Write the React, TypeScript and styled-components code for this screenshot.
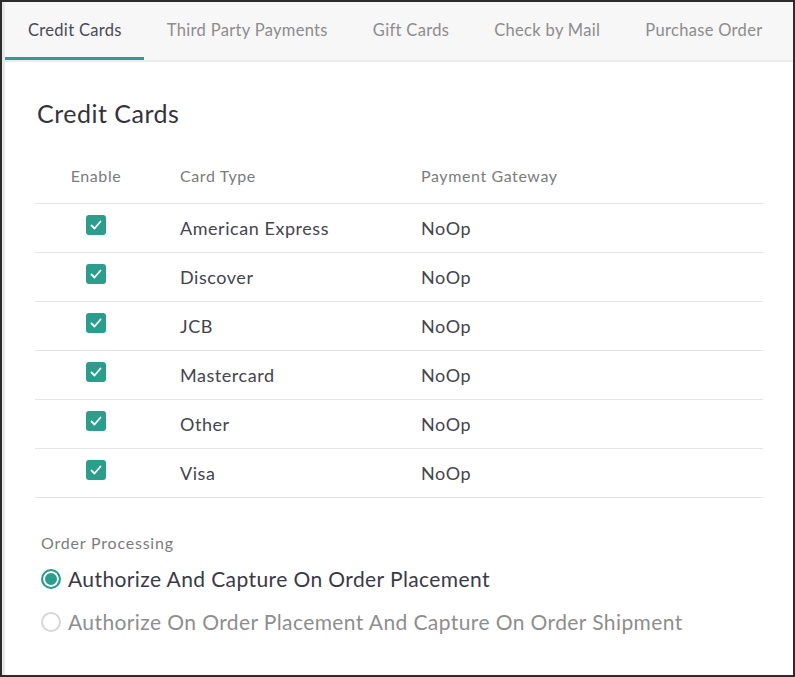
import { useState } from "react";
import styled, { createGlobalStyle } from "styled-components";

const GlobalStyle = createGlobalStyle`
  html, body {
    margin: 0;
    padding: 0;
  }
  body {
    font-family: Lato, "Open Sans", sans-serif;
    color: #3f3f4a;
  }
  * {
    box-sizing: border-box;
  }
`;

const Frame = styled.div`
  display: flex;
  height: 100vh;
  border: 2px solid #2b2b2b;
  background: #fff;
`;

const Gutter = styled.div`
  width: 3px;
  background: #e8e8e8;
`;

const Panel = styled.div`
  flex: 1;
  min-width: 0;
  display: flex;
  flex-direction: column;
`;

const TabBar = styled.div`
  display: flex;
  overflow: hidden;
  background: #f7f7f7;
  border-bottom: 2px solid #ececec;
`;

const Tab = styled.button<{ $active?: boolean }>`
  flex: none;
  white-space: nowrap;
  height: 58px;
  padding: 1px 22px 0 23px;
  border: none;
  border-bottom: 3px solid ${(p) => (p.$active ? "#2a9d8c" : "transparent")};
  background: none;
  font-family: inherit;
  font-size: 16.5px;
  letter-spacing: 0.32px;
  color: ${(p) => (p.$active ? "#4a4a58" : "#8c8c8c")};
  cursor: pointer;
`;

const Content = styled.div`
  padding: 36px 30px 0;
`;

const Title = styled.h2`
  margin: 0 0 0 2px;
  font-size: 25px;
  font-weight: 400;
  letter-spacing: 0.5px;
  line-height: 30px;
  color: #33333d;
`;

const Table = styled.div`
  margin-top: 22px;
  display: grid;
  grid-template-columns: 122px 241px 1fr;
`;

const HeadCell = styled.div<{ $center?: boolean }>`
  height: 54px;
  display: flex;
  align-items: center;
  justify-content: ${(p) => (p.$center ? "center" : "flex-start")};
  padding-left: ${(p) => (p.$center ? "0" : "23px")};
  padding-bottom: 3px;
  border-bottom: 1px solid #e4e4e4;
  font-size: 16px;
  letter-spacing: 0.6px;
  color: #7c7c7c;
`;

const Cell = styled.div<{ $center?: boolean }>`
  height: 49px;
  display: flex;
  align-items: center;
  justify-content: ${(p) => (p.$center ? "center" : "flex-start")};
  padding-left: ${(p) => (p.$center ? "0" : "23px")};
  padding-bottom: ${(p) => (p.$center ? "6px" : "0")};
  border-bottom: 1px solid #e4e4e4;
  font-size: 18px;
  letter-spacing: 0.55px;
  color: #44444e;
`;

const Check = styled.span`
  width: 20px;
  height: 20px;
  border-radius: 3px;
  background: #2a9d8c;
  display: flex;
  align-items: center;
  justify-content: center;
`;

const Section = styled.div`
  padding: 35px 6px 0;
`;

const Label = styled.div`
  font-size: 16px;
  letter-spacing: 0.8px;
  color: #7c7c7c;
  margin-bottom: 5px;
`;

const Option = styled.label<{ $on?: boolean }>`
  display: flex;
  align-items: center;
  gap: 7px;
  height: 43px;
  white-space: nowrap;
  font-size: 21px;
  letter-spacing: 0.4px;
  color: ${(p) => (p.$on ? "#3a3a46" : "#8e8e8e")};
  cursor: pointer;
`;

const Radio = styled.span<{ $on?: boolean }>`
  flex: none;
  width: 20px;
  height: 20px;
  border-radius: 50%;
  border: 2px solid ${(p) => (p.$on ? "#2a9d8c" : "#d6d6d6")};
  background: ${(p) => (p.$on ? "#2a9d8c" : "#fff")};
  box-shadow: ${(p) => (p.$on ? "inset 0 0 0 2px #fff" : "none")};
`;

const tabs = [
  "Credit Cards",
  "Third Party Payments",
  "Gift Cards",
  "Check by Mail",
  "Purchase Order",
];

const cards = [
  "American Express",
  "Discover",
  "JCB",
  "Mastercard",
  "Other",
  "Visa",
];

const options = [
  "Authorize And Capture On Order Placement",
  "Authorize On Order Placement And Capture On Order Shipment",
];

const CheckMark = () => (
  <svg width="14" height="14" viewBox="0 0 14 14" fill="none">
    <path
      d="M2.5 7.5l3 3 6-7"
      stroke="#fff"
      strokeWidth="1.8"
      strokeLinecap="round"
      strokeLinejoin="round"
    />
  </svg>
);

export default function App() {
  const [active, setActive] = useState(0);
  const [mode, setMode] = useState(0);

  return (
    <>
      <GlobalStyle />
      <Frame>
        <Gutter />
        <Panel>
          <TabBar>
            {tabs.map((t, i) => (
              <Tab key={t} $active={active === i} onClick={() => setActive(i)}>
                {t}
              </Tab>
            ))}
          </TabBar>
          <Content>
            <Title>Credit Cards</Title>
            <Table>
              <HeadCell $center>Enable</HeadCell>
              <HeadCell>Card Type</HeadCell>
              <HeadCell>Payment Gateway</HeadCell>
              {cards.map((c) => (
                <>
                  <Cell $center key={c + "-check"}>
                    <Check>
                      <CheckMark />
                    </Check>
                  </Cell>
                  <Cell key={c}>{c}</Cell>
                  <Cell key={c + "-gw"}>NoOp</Cell>
                </>
              ))}
            </Table>
            <Section>
              <Label>Order Processing</Label>
              {options.map((o, i) => (
                <Option key={o} $on={mode === i} onClick={() => setMode(i)}>
                  <Radio $on={mode === i} />
                  {o}
                </Option>
              ))}
            </Section>
          </Content>
        </Panel>
      </Frame>
    </>
  );
}
